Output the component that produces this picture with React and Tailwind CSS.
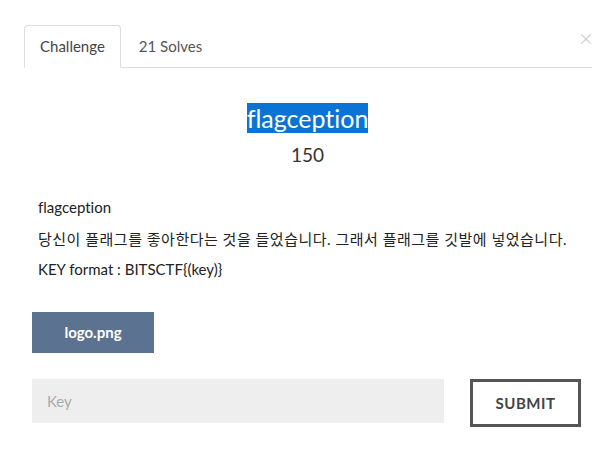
const App = () => {
  return (
    <div className="relative w-[615px] h-[468px] bg-white text-[#333] font-['Lato','Noto_Sans_CJK_KR',sans-serif] [font-variant-ligatures:none] [font-feature-settings:'liga'_0,'clig'_0,'dlig'_0]">
      {/* close */}
      <button className="absolute top-[26px] right-[22px] text-[#c8c8c8] text-[24px] leading-none font-light">
        ×
      </button>

      {/* tabs */}
      <div className="pt-[25px] pl-[24px] pr-[23px]">
        <ul className="flex border-b border-[#ddd] h-[43px]">
          <li className="-mb-px h-[43px] px-[15px] flex items-center border border-[#ddd] border-b-white rounded-t-[4px] bg-white text-[15px] text-[#444]">
            Challenge
          </li>
          <li className="h-[42px] px-[18px] flex items-center text-[15px] text-[#555]">21 Solves</li>
        </ul>
      </div>

      {/* title */}
      <div className="mt-[36px] flex flex-col items-center">
        <h3 className="text-[25px] leading-[29px]">
          <span className="bg-[#0a74d6] text-white">flagception</span>
        </h3>
        <h4 className="mt-[10px] text-[19px] leading-[24px] text-[#333]">150</h4>
      </div>

      {/* description */}
      <div className="mt-[30px] pl-[38px] text-[15px] leading-[21px] text-[#222]">
        <p className="mb-[11px]">flagception</p>
        <p className="mb-[9px] tracking-[0.5px]">당신이 플래그를 좋아한다는 것을 들었습니다. 그래서 플래그를 깃발에 넣었습니다.</p>
        <p>KEY format : BITSCTF{'{'}(key){'}'}</p>
      </div>

      {/* file */}
      <div className="mt-[32px] pl-[32px]">
        <button className="w-[122px] h-[41px] bg-[#5b7290] text-white font-bold text-[15px]">logo.png</button>
      </div>

      {/* key form */}
      <div className="mt-[26px] flex items-start pl-[32px]">
        <input
          className="w-[412px] h-[44px] bg-[#eee] px-[15px] text-[15px] outline-none placeholder:text-[#aaa]"
          placeholder="Key"
        />
        <button className="ml-[26px] w-[111px] h-[48px] border-[3px] border-[#555] bg-white text-[#444] font-bold text-[15px] tracking-[0.5px]">
          SUBMIT
        </button>
      </div>
    </div>
  );
};

export default App;
